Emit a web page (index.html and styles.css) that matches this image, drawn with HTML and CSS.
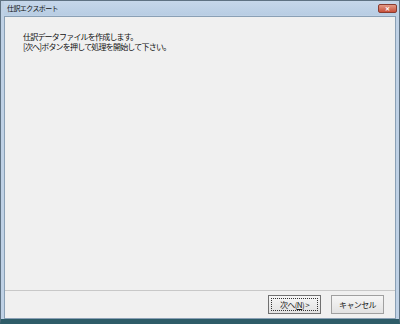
FILE: index.html
```html
<!DOCTYPE html>
<html lang="ja">
<head>
    <meta charset="UTF-8">
    <title>仕訳エクスポート</title>
    <link rel="stylesheet" href="styles.css">
</head>
<body>
    <div class="window">
        <!-- Title bar -->
        <div class="titlebar">
            <span class="title">仕訳エクスポート</span>
            <span class="close">&#x2715;</span>
        </div>

        <div class="client">
            <div class="message">
                <p>仕訳データファイルを作成します。</p>
                <p>[次へ]ボタンを押して処理を開始して下さい。</p>
            </div>

            <div class="footer">
                <button class="btn default">次へ(<u>N</u>)&nbsp;&gt;</button>
                <button class="btn">キャンセル</button>
            </div>
        </div>
    </div>
</body>
</html>
```

FILE: styles.css
```css
body {
    margin: 0;
    padding: 0;
    background: #ffffff;
    font-family: "Noto Sans CJK JP", sans-serif;
}

.window {
    width: 400px;
    height: 324px;
    box-sizing: border-box;
    display: flex;
    flex-direction: column;
    background: #bfd1e5;
    border: 1px solid #5f7283;
    border-bottom: 5px solid #2e5c68;
    padding: 0 3px;
}

.titlebar {
    height: 14px;
    display: flex;
    align-items: center;
    justify-content: space-between;
    background: linear-gradient(#c6d7ea, #b8cde3);
}

.title {
    font-size: 7px;
    letter-spacing: -0.6px;
    color: #141414;
    padding-left: 3px;
    line-height: 12px;
}

.close {
    width: 17px;
    height: 7px;
    margin-right: -1px;
    margin-top: 1px;
    background: linear-gradient(#e29a86, #c8503a);
    border: 1px solid #8a3b30;
    border-radius: 2px;
    color: #fff;
    font-size: 6px;
    line-height: 7px;
    text-align: center;
    font-weight: bold;
}

.client {
    flex: 1;
    display: flex;
    flex-direction: column;
    background: #f0f0f0;
    border: 1px solid #8aa0b5;
    margin-top: 1px;
}

.message {
    flex: 1;
    padding: 15px 0 0 18px;
}

.message p {
    margin: 0;
    font-size: 8px;
    line-height: 10px;
    letter-spacing: -0.8px;
    color: #111;
}

.footer {
    height: 27px;
    border-top: 1px solid #c8c8c8;
    display: flex;
    justify-content: flex-end;
    align-items: center;
    gap: 10px;
    padding-right: 11px;
}

.btn {
    width: 53px;
    height: 19px;
    padding: 0;
    font-family: "Noto Sans CJK JP", sans-serif;
    font-size: 8px;
    letter-spacing: -0.6px;
    color: #1a1a1a;
    background: linear-gradient(#f6f6f6, #e2e2e2);
    border: 1px solid #a0a0a0;
    border-radius: 0;
}

.btn.default {
    border-color: #707070;
    outline: 1px dotted #333;
    outline-offset: -4px;
}

.btn u {
    text-decoration: underline;
}
```
